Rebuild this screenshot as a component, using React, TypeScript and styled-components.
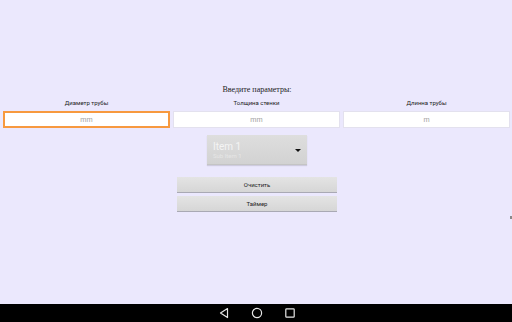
import React from 'react';
import styled, { createGlobalStyle } from 'styled-components';

const GlobalStyle = createGlobalStyle`
  html, body {
    margin: 0;
    padding: 0;
    background: #ebe8fd;
  }
  * { box-sizing: border-box; }
`;

const fields = [
  { label: 'Диаметр трубы', unit: 'mm', focused: true },
  { label: 'Толщина стенки', unit: 'mm', focused: false },
  { label: 'Длинна трубы', unit: 'm', focused: false },
];

const App = () => {
  return (
    <Screen>
      <GlobalStyle />
      <Content>
        <Title>Введите параметры:</Title>
        <FieldsRow>
          {fields.map((f) => (
            <Field key={f.label}>
              <Label>{f.label}</Label>
              <Input $focused={f.focused}>{f.unit}</Input>
            </Field>
          ))}
        </FieldsRow>
        <Spinner>
          <SpinnerText>
            <ItemTitle>Item 1</ItemTitle>
            <ItemSub>Sub Item 1</ItemSub>
          </SpinnerText>
          <Arrow />
        </Spinner>
        <Buttons>
          <Button>Очистить</Button>
          <Button>Таймер</Button>
        </Buttons>
        <EdgeMark />
      </Content>
      <NavBar>
        <svg width="12" height="12" viewBox="0 0 12 12">
          <path d="M9.5 1.5 L2.5 6 L9.5 10.5 Z" fill="none" stroke="#e6e6e6" strokeWidth="1.2" strokeLinejoin="round" />
        </svg>
        <svg width="12" height="12" viewBox="0 0 12 12">
          <circle cx="6" cy="6" r="4.6" fill="none" stroke="#e6e6e6" strokeWidth="1.2" />
        </svg>
        <svg width="12" height="12" viewBox="0 0 12 12">
          <rect x="1.8" y="1.8" width="8.4" height="8.4" rx="0.8" fill="none" stroke="#e6e6e6" strokeWidth="1.2" />
        </svg>
      </NavBar>
    </Screen>
  );
};

export default App;

const Screen = styled.div`
  width: 512px;
  height: 322px;
  display: flex;
  flex-direction: column;
  background: #ebe8fd;
  overflow: hidden;
`;

const Content = styled.div`
  position: relative;
  flex: 1;
  display: flex;
  flex-direction: column;
  align-items: center;
  padding-top: 85px;
`;

const Title = styled.div`
  font-family: 'Liberation Serif', 'DejaVu Serif', serif;
  font-size: 8px;
  line-height: 10px;
  color: #222;
  margin-left: 2px;
`;

const FieldsRow = styled.div`
  display: flex;
  width: 100%;
  gap: 3px;
  padding: 0 2px 0 3px;
  margin-top: 4px;
`;

const Field = styled.div`
  flex: 1;
  display: flex;
  flex-direction: column;
  align-items: center;
`;

const Label = styled.div`
  font-family: Roboto, 'Liberation Sans', sans-serif;
  font-size: 6px;
  line-height: 8px;
  color: #222;
  margin-bottom: 4px;
`;

const Input = styled.div<{ $focused: boolean }>`
  width: 100%;
  height: 17px;
  background: #fff;
  border: ${(p) => (p.$focused ? '2px solid #f7993f' : '1px solid #e3e1ee')};
  display: flex;
  align-items: center;
  justify-content: center;
  font-family: Roboto, 'Liberation Sans', sans-serif;
  font-size: 7px;
  color: #a0a0a0;
`;

const Spinner = styled.div`
  margin-top: 7px;
  margin-left: 2px;
  width: 100px;
  height: 30px;
  background: linear-gradient(#dedede, #d2d2d2);
  border-bottom: 1px solid #c4c4c4;
  box-shadow: 0 1px 1px rgba(0, 0, 0, 0.12);
  display: flex;
  align-items: center;
  justify-content: space-between;
  padding: 0 6px 0 6px;
`;

const SpinnerText = styled.div`
  display: flex;
  flex-direction: column;
`;

const ItemTitle = styled.div`
  font-family: Roboto, 'Liberation Sans', sans-serif;
  font-size: 10px;
  line-height: 11px;
  color: #f4f4f4;
`;

const ItemSub = styled.div`
  font-family: Roboto, 'Liberation Sans', sans-serif;
  font-size: 6px;
  line-height: 7px;
  color: #e6e6e6;
`;

const Arrow = styled.div`
  width: 0;
  height: 0;
  border-left: 3px solid transparent;
  border-right: 3px solid transparent;
  border-top: 3px solid #111;
  margin-top: 2px;
`;

const Buttons = styled.div`
  margin-top: 12px;
  margin-left: 2px;
  display: flex;
  flex-direction: column;
  gap: 3px;
`;

const Button = styled.div`
  width: 160px;
  height: 16px;
  background: linear-gradient(#e4e4e4, #d6d6d6);
  border-bottom: 1px solid #a9a9b4;
  display: flex;
  align-items: center;
  justify-content: center;
  font-family: Roboto, 'Liberation Sans', sans-serif;
  font-size: 6px;
  color: #222;
`;

const EdgeMark = styled.div`
  position: absolute;
  right: 0;
  top: 216px;
  width: 2px;
  height: 3px;
  background: #8a8a8a;
`;

const NavBar = styled.div`
  height: 18px;
  background: #000;
  display: flex;
  align-items: center;
  justify-content: center;
  gap: 21px;
  padding-left: 2px;
`;
